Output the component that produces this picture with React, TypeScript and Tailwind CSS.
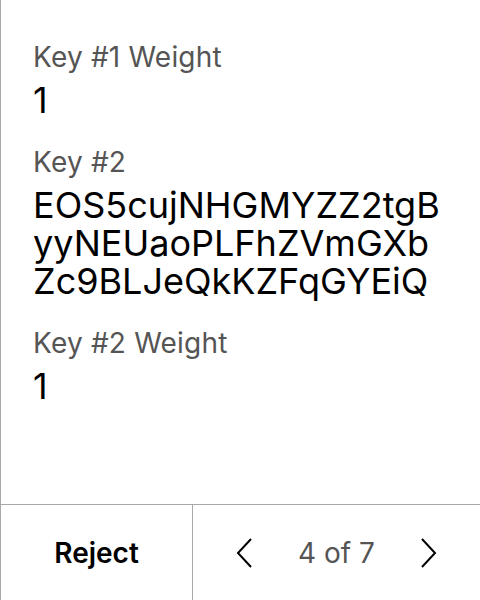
import React from "react";

const fields = [
  { label: "Key #1 Weight", lines: ["1"] },
  { label: "Key #2", lines: ["EOS5cujNHGMYZZ2tgB", "yyNEUaoPLFhZVmGXb", "Zc9BLJeQkKZFqGYEiQ"] },
  { label: "Key #2 Weight", lines: ["1"] },
];

const ChevronLeft = () => (
  <svg width="18" height="30" viewBox="0 0 18 30" fill="none" stroke="#000" strokeWidth="2">
    <path d="M16 1 L3 15 L16 29" />
  </svg>
);

const ChevronRight = () => (
  <svg width="18" height="30" viewBox="0 0 18 30" fill="none" stroke="#000" strokeWidth="2">
    <path d="M2 1 L15 15 L2 29" />
  </svg>
);

export default function App() {
  return (
    <div
      className="w-[480px] h-[600px] flex flex-col bg-white border-l border-[#a8a8a8] text-black"
      style={{ fontFamily: "Inter, 'Noto Sans', sans-serif" }}
    >
      {/* Fields */}
      <div className="flex-1 pl-[32px] pr-4 pt-[40px] flex flex-col gap-[26px]">
        {fields.map((f) => (
          <div key={f.label} className="flex flex-col gap-[7px]">
            <div className="text-[28px] leading-[34px] text-[#555555] tracking-[0.2px]">{f.label}</div>
            <div className="text-[36px] leading-[38px]">
              {f.lines.map((l) => (
                <div key={l}>{l}</div>
              ))}
            </div>
          </div>
        ))}
      </div>

      {/* Footer */}
      <div className="h-[96px] flex border-t border-[#a8a8a8]">
        <button className="w-[192px] flex items-center justify-center text-[28px] font-semibold border-r border-[#a8a8a8]">
          Reject
        </button>
        <div className="flex-1 flex items-center justify-between px-[42px]">
          <ChevronLeft />
          <span className="text-[28px] text-[#555555]">4 of 7</span>
          <ChevronRight />
        </div>
      </div>
    </div>
  );
}
